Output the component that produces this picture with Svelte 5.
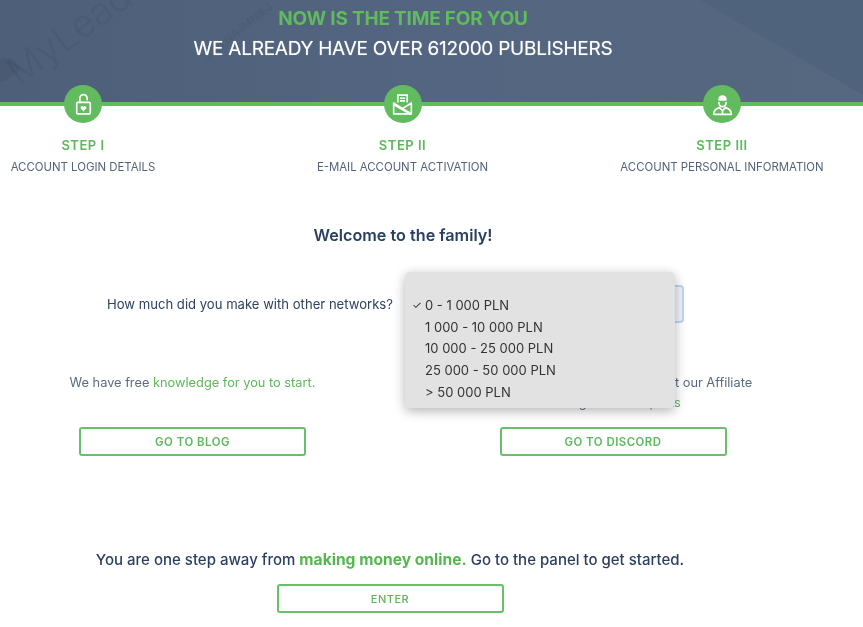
<script lang="ts">
  const steps = [
    { id: "lock", title: "STEP I", label: "ACCOUNT LOGIN DETAILS" },
    { id: "mail", title: "STEP II", label: "E-MAIL ACCOUNT ACTIVATION" },
    { id: "user", title: "STEP III", label: "ACCOUNT PERSONAL INFORMATION" },
  ];

  const ranges = ["0 - 1 000 PLN", "1 000 - 10 000 PLN", "10 000 - 25 000 PLN", "25 000 - 50 000 PLN", "> 50 000 PLN"];
</script>

<div class="page">
  <header class="hero">
    <span class="mark mark-logo">MyLead</span>
    <span class="mark mark-small">SIĘ I NAJMNIEJ</span>
    <h1>NOW IS THE TIME FOR YOU</h1>
    <h2>WE ALREADY HAVE OVER 612000 PUBLISHERS</h2>
  </header>

  <ol class="steps">
    {#each steps as step}
      <li class="step">
        <span class="badge">
          <svg viewBox="0 0 24 24" width="25" height="25" fill="none" stroke="#fff" stroke-width="1.6">
            {#if step.id === "lock"}
              <path d="M8.500 10V6a3.500 3.500 0 0 1 7 0V7.500" stroke-linecap="round" />
              <rect x="5.500" y="10" width="13" height="11" rx="1" />
              <path d="M12 18.600l-2.600-2.800a1.500 1.500 0 0 1 2.600-1.600 1.500 1.500 0 0 1 2.600 1.600z" fill="#fff" stroke="none" />
            {:else if step.id === "mail"}
              <path d="M7.500 10V3h9v7" />
              <path d="M9.500 6h5M9.500 8.500h5" />
              <path d="M3.500 10.500v10.500h17V10.500L12 16z" stroke-linejoin="round" />
              <path d="M4 12l16 9" stroke-width="2.400" />
            {:else}
              <path d="M8 8.500V7a4 4 0 0 1 8 0v1.500z" fill="#fff" stroke="none" />
              <path d="M8.500 9.500c0 3 1.500 4.500 3.500 4.500s3.500-1.500 3.500-4.500" />
              <path d="M3.500 21.500c0-3.500 2-5.500 5.500-6.500l3 3 3-3c3.500 1 5.500 3 5.500 6.500z" stroke-linejoin="round" />
              <path d="M12 18v3.500" />
            {/if}
          </svg>
        </span>
        <strong>{step.title}</strong>
        <span class="step-label">{step.label}</span>
      </li>
    {/each}
  </ol>

  <h3 class="welcome">Welcome to the family!</h3>

  <div class="question">
    <span>How much did you make with other networks?</span>
    <div class="select-wrap">
      <div class="select"></div>
      <ul class="menu">
        {#each ranges as range, i}
          <li>
            <span class="tick">{i === 0 ? "✓" : ""}</span>{range}
          </li>
        {/each}
      </ul>
    </div>
  </div>

  <div class="links">
    <section>
      <p>We have free <em>knowledge for you to start.</em></p>
      <a class="btn" href="#blog">GO TO BLOG</a>
    </section>
    <section>
      <p>Any questions? Ask the experts at our Affiliate<br />Managers and <em>experts</em></p>
      <a class="btn" href="#discord">GO TO DISCORD</a>
    </section>
  </div>

  <footer class="enter">
    <p>You are one step away from <b>making money online.</b> Go to the panel to get started.</p>
    <a class="btn btn-enter" href="#panel">ENTER</a>
  </footer>
</div>

<style>
  :global(body) {
    margin: 0;
    background: #fff;
  }

  .page {
    width: 863px;
    height: 627px;
    overflow: hidden;
    font-family: Inter, "Liberation Sans", sans-serif;
    color: #2f4260;
    filter: blur(0.35px);
  }

  .hero {
    position: relative;
    height: 106px;
    box-sizing: border-box;
    padding: 8px 57px 0 0;
    overflow: hidden;
    text-align: center;
    border-bottom: 4px solid #5fbc5f;
    background: linear-gradient(90deg, #4e5f79, #536580 50%, #56687f);
  }

  /* darker facet in the top right corner */
  .hero::before {
    content: "";
    position: absolute;
    inset: 0;
    background: #50637d;
    clip-path: polygon(700px 0, 863px 0, 863px 95px);
  }

  /* logo shape of the watermark */
  .hero::after {
    content: "";
    position: absolute;
    left: -10px;
    top: 60px;
    width: 28px;
    height: 20px;
    border-radius: 4px 12px 4px 12px;
    background: rgba(40, 52, 72, 0.1);
    transform: rotate(-36deg);
  }

  .mark {
    position: absolute;
    white-space: nowrap;
    color: rgba(40, 52, 72, 0.1);
  }

  .mark-logo {
    left: -3px;
    top: 10px;
    font-size: 38px;
    font-weight: 300;
    transform: rotate(-36deg);
  }

  .mark-small {
    left: 196px;
    top: 24px;
    font-size: 11px;
    font-weight: 700;
    transform: rotate(-38deg);
  }

  h1 {
    position: relative;
    margin: 0;
    font-size: 19px;
    line-height: 22px;
    font-weight: 700;
    letter-spacing: -0.2px;
    color: #5fbb5b;
  }

  h2 {
    position: relative;
    margin: 8px 0 0;
    font-size: 19px;
    line-height: 22px;
    font-weight: 400;
    letter-spacing: -0.25px;
    color: #fff;
    text-shadow: 0 0 1px rgba(255, 255, 255, 0.5);
  }

  .steps {
    display: flex;
    gap: 153.5px;
    margin: -21px 0 0;
    padding: 0;
    list-style: none;
  }

  .step {
    position: relative;
    display: flex;
    flex-direction: column;
    align-items: center;
    width: 166px;
  }

  .badge {
    display: flex;
    align-items: center;
    justify-content: center;
    width: 38px;
    height: 38px;
    border-radius: 50%;
    background: #62bb5e;
  }

  .step strong {
    margin-top: 14px;
    font-size: 13px;
    line-height: 16px;
    font-weight: 600;
    letter-spacing: 0.5px;
    color: #5cb85c;
  }

  .step-label {
    margin-top: 7px;
    font-size: 11.4px;
    line-height: 14px;
    white-space: nowrap;
    color: #55637a;
  }

  .welcome {
    margin: 51px 0 0;
    padding-right: 57px;
    text-align: center;
    font-size: 16.2px;
    line-height: 20px;
    font-weight: 600;
    color: #2a3f5f;
  }

  .question {
    display: flex;
    align-items: center;
    gap: 12px;
    margin-top: 40px;
    padding-left: 107px;
    font-size: 13.1px;
  }

  .select-wrap {
    position: relative;
    width: 279px;
    height: 38px;
  }

  .select {
    height: 100%;
    box-sizing: border-box;
    border: 2px solid #bfd4f5;
    border-radius: 4px;
    background: #eef3fb;
  }

  .menu {
    position: absolute;
    z-index: 2;
    left: 0;
    top: -13px;
    width: 270px;
    height: 136px;
    box-sizing: border-box;
    margin: 0;
    padding: 22px 0 0;
    list-style: none;
    border-radius: 5px;
    background: #e2e2e2;
    box-shadow: 0 3px 12px rgba(0, 0, 0, 0.3);
    font-size: 13px;
    color: #333;
  }

  .menu li {
    display: flex;
    height: 21.8px;
    align-items: center;
    white-space: nowrap;
  }

  .tick {
    width: 20px;
    padding-left: 7px;
    box-sizing: border-box;
    font-size: 11px;
    font-weight: 400;
  }

  .links {
    display: grid;
    grid-template-columns: 385px 386px;
    gap: 35px;
    margin-top: 50px;
    text-align: center;
  }

  .links section {
    display: flex;
    flex-direction: column;
    align-items: center;
  }

  .links p {
    height: 34px;
    margin: 0 0 20px;
    font-size: 12.8px;
    line-height: 20px;
    white-space: nowrap;
    color: #5a6a82;
  }

  em {
    font-style: normal;
    color: #5cb85c;
  }

  .btn {
    display: flex;
    align-items: center;
    justify-content: center;
    width: 227px;
    height: 29px;
    box-sizing: border-box;
    border: 2px solid #6abf6a;
    border-radius: 3px;
    font-size: 11.4px;
    font-weight: 600;
    letter-spacing: 0.5px;
    text-decoration: none;
    color: #5cb85c;
  }

  .enter {
    display: flex;
    flex-direction: column;
    align-items: center;
    width: 780px;
    margin-top: 94px;
  }

  .enter p {
    margin: 0 0 14px;
    font-size: 15px;
    line-height: 20px;
    font-weight: 500;
    white-space: nowrap;
    color: #2a3f5f;
  }

  .enter b {
    font-size: 15.6px;
    font-weight: 700;
    color: #55b84f;
  }

  .btn-enter {
    font-size: 11px;
    font-weight: 500;
  }
</style>
